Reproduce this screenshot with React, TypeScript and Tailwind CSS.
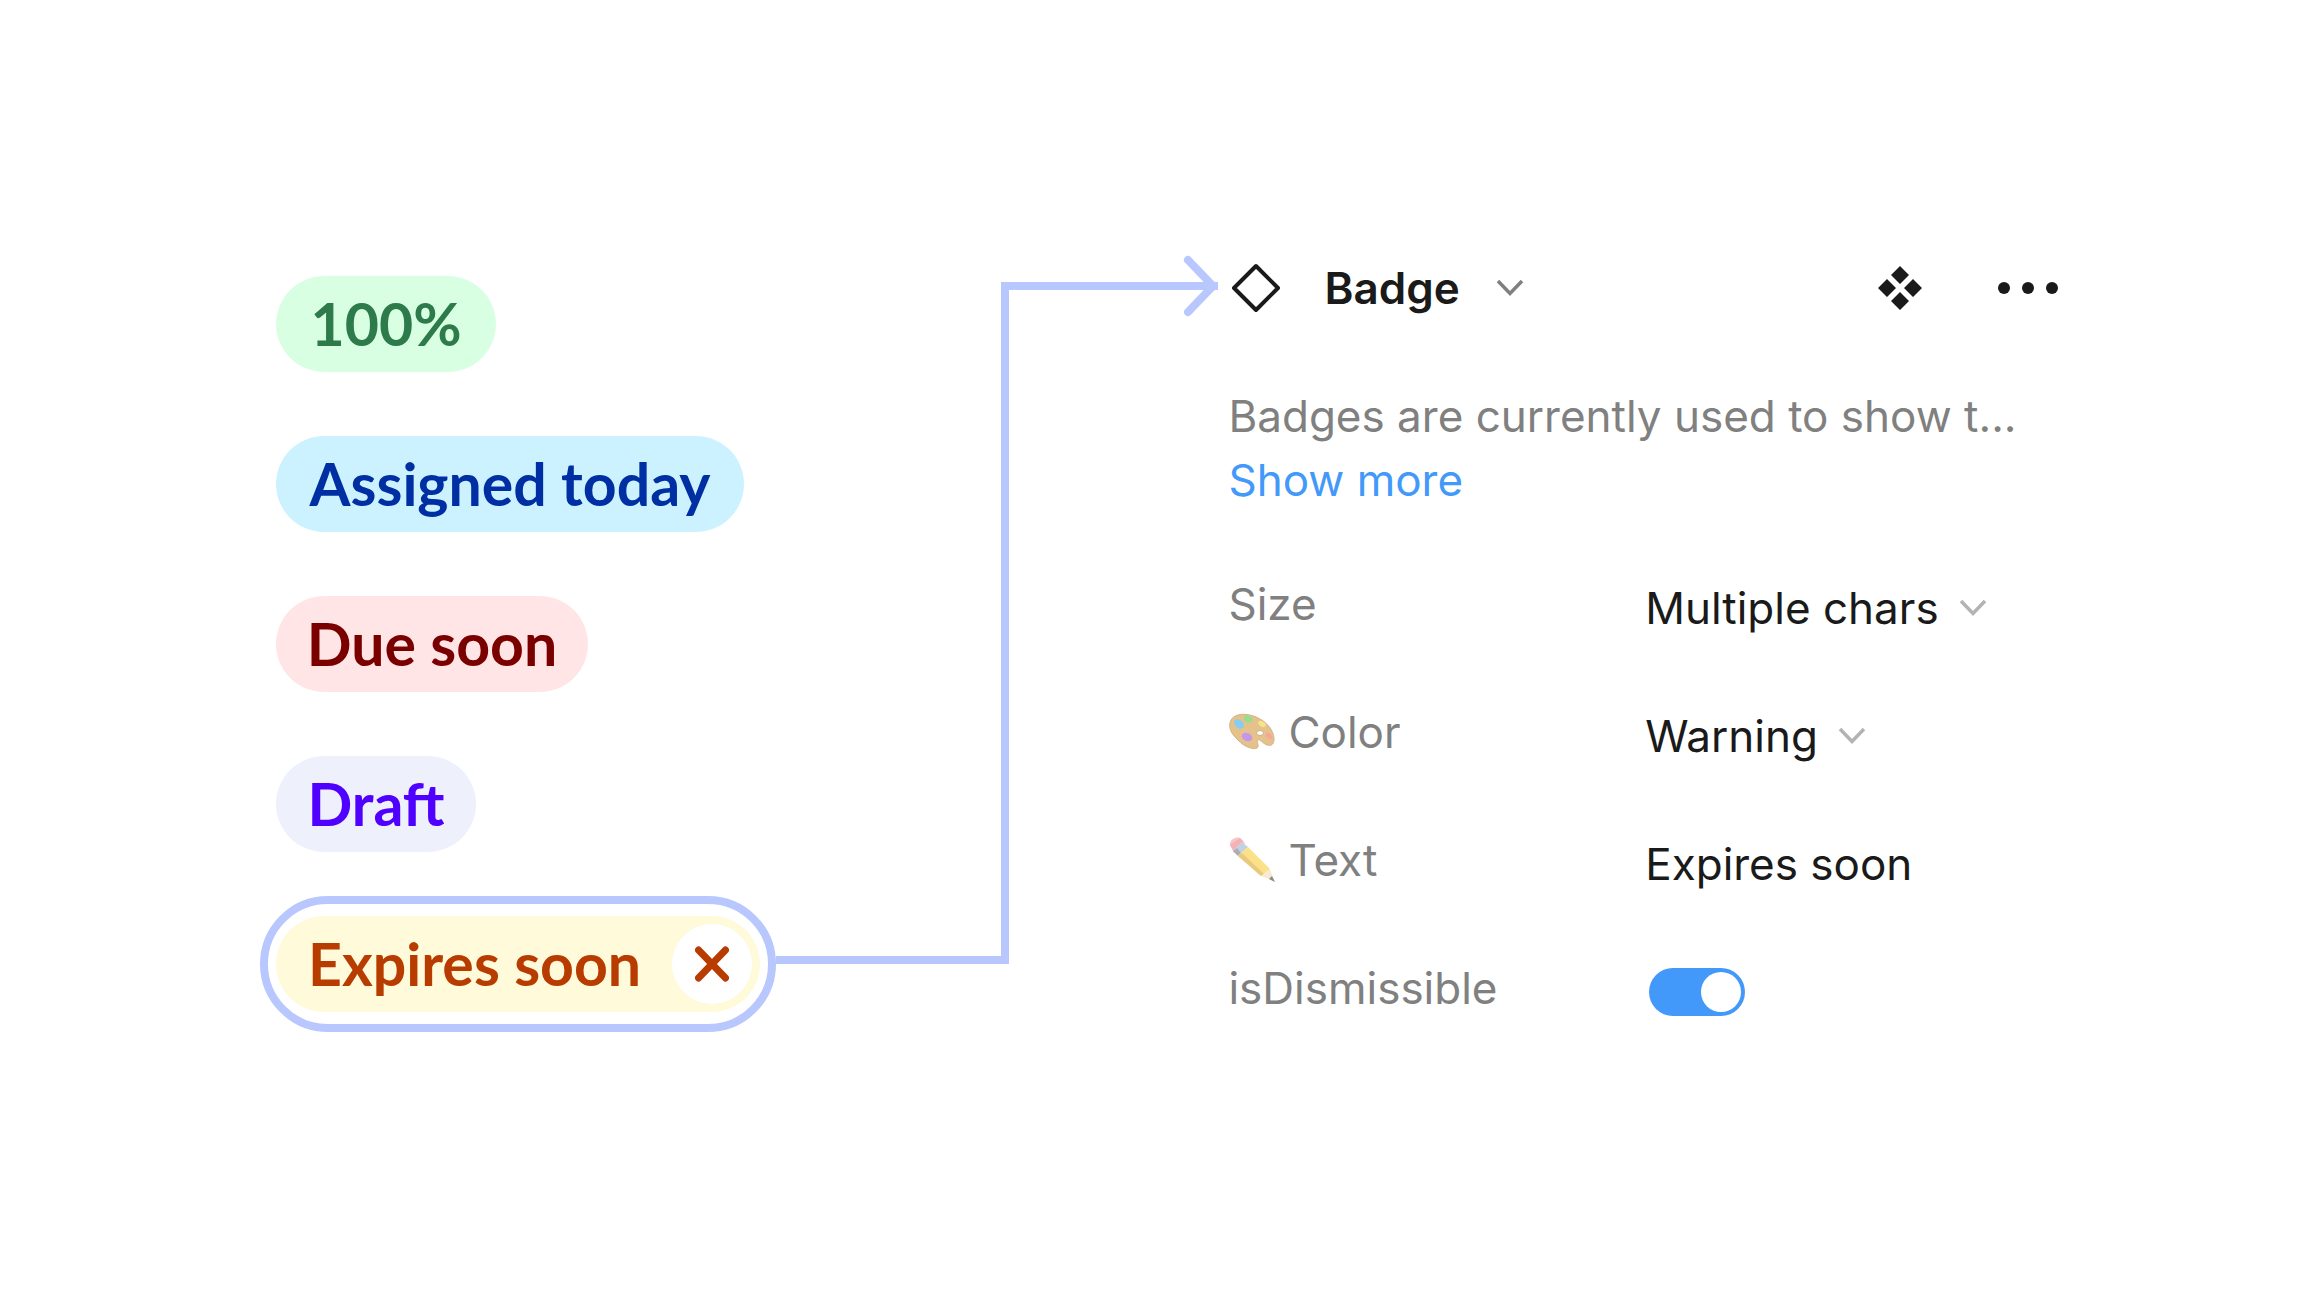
import React, { useState } from "react";

function Chevron({ className }: { className: string }) {
  return (
    <svg viewBox="0 0 28 18" className={className} fill="none" stroke="currentColor" strokeWidth="3.500" aria-hidden="true">
      <path d="M2 2 14 14.500 26 2" />
    </svg>
  );
}

const badges = [
  { text: "100%", style: "w-[220px] bg-[#d9ffe3] text-[#2d7a4b]" },
  { text: "Assigned today", style: "w-[468px] bg-[#ccf2ff] text-[#002fa3]" },
  { text: "Due soon", style: "w-[312px] bg-[#ffe5e5] text-[#7a0000]" },
  { text: "Draft", style: "w-[200px] bg-[#eef0fb] text-[#4f00ff]" },
];

function BadgeList() {
  return (
    <ul className="flex flex-col items-start font-[Lato,sans-serif] text-[59px] leading-[96px] font-bold whitespace-nowrap">
      {badges.map((b) => (
        <li key={b.text} className={`mb-16 ml-4 h-24 rounded-full text-center ${b.style}`}>
          {b.text}
        </li>
      ))}
      <li className="-mt-5 rounded-full border-8 border-[#b8c8ff] px-2 py-3">
        <span className="flex h-24 w-[484px] items-center justify-between rounded-full bg-[#fffad9] pr-2 pl-8 text-[#b83c00]">
          Expires soon
          <button aria-label="Dismiss" className="flex size-20 items-center justify-center rounded-full bg-white">
            <svg viewBox="0 0 34 36" className="h-9 w-[34px]" fill="none" stroke="currentColor" strokeWidth="7" strokeLinecap="round" aria-hidden="true">
              <path d="M3.500 4 30.500 32M30.500 4 3.500 32" />
            </svg>
          </button>
        </span>
      </li>
    </ul>
  );
}

function Connector() {
  return (
    <div className="mt-[6px] mb-[68px] flex min-w-0 flex-[8] self-stretch" aria-hidden="true">
      <div className="flex-[15] border-r-8 border-b-8 border-[#b8c8ff]" />
      <div className="relative flex-[14] border-t-8 border-[#b8c8ff]">
        <svg viewBox="0 0 36 68" className="absolute -top-[38px] right-0 h-[68px] w-9" fill="none" stroke="#b8c8ff" strokeWidth="8" strokeLinecap="round" strokeLinejoin="round">
          <path d="M6 8 31 34 6 60" />
        </svg>
      </div>
    </div>
  );
}

function Palette() {
  return (
    <svg viewBox="0 0 48 40" className="h-10 w-12 opacity-60" aria-hidden="true">
      <path d="M3 8C7 1 19 1 28 5c10 4 18 13 18 22 0 6-3 7-7 6-5-2-7-6-9-5s2 6-1 8c-3 2-13-1-19-8C2 21 0 14 3 8Z" fill="#d49a41" stroke="#b98232" />
      <ellipse cx="32" cy="21" rx="3.500" ry="2.500" fill="#fff" stroke="#a97a32" />
      <ellipse cx="20" cy="7" rx="4.500" ry="3.500" transform="rotate(20 20 7)" fill="#55c845" />
      <ellipse cx="11" cy="12" rx="5.500" ry="4" transform="rotate(40 11 12)" fill="#34afe8" />
      <ellipse cx="19" cy="25" rx="5.500" ry="4" transform="rotate(25 19 25)" fill="#a052df" />
      <ellipse cx="34" cy="12" rx="4" ry="2.500" transform="rotate(30 34 12)" fill="#f3d33a" />
      <ellipse cx="41" cy="24" rx="4" ry="2.500" transform="rotate(45 41 24)" fill="#f66a5a" />
    </svg>
  );
}

function Pencil() {
  return (
    <svg viewBox="0 0 48 48" className="size-12 opacity-60" aria-hidden="true">
      <path d="M2 9C1 5 7 0 12 2l5 5L6 17Z" fill="#f1a0a5" />
      <path d="M2 9 5 14 15 5 12 2Z" fill="#ed7f88" />
      <path d="M14 6 20 11 10 20 5 15Z" fill="#9fb4cf" />
      <path d="M5 15 9 12 13 17 10 20Z" fill="#6f7b87" />
      <path d="M20 11 42 33 33 40 10 20Z" fill="#f9cf3c" />
      <path d="M10 20 14 17 36 38 33 40Z" fill="#d9a62b" />
      <path d="M42 33 46 45 33 40Z" fill="#f3dcb5" />
      <path d="M44 40 47 46 41 43Z" fill="#3d3d3d" />
    </svg>
  );
}

function Row({ id, label, icon, children }: { id: string; label: string; icon?: React.ReactNode; children: React.ReactNode }) {
  return (
    <div className="grid h-16 grid-cols-2 items-start gap-x-1">
      <label htmlFor={id} className="flex h-16 items-center gap-3 text-[#808080]">
        {icon}
        {label}
      </label>
      <div className="mt-1 flex h-16 items-center gap-5 text-[#1a1a1a]">{children}</div>
    </div>
  );
}

function Select({ id, options }: { id: string; options: string[] }) {
  return (
    <>
      <select id={id} className="field-sizing-content appearance-none bg-transparent">
        {options.map((o) => (
          <option key={o}>{o}</option>
        ))}
      </select>
      <Chevron className="h-[18px] w-7 text-[#b3b3b3]" />
    </>
  );
}

export default function App() {
  const [text, setText] = useState("Expires soon");
  const [on, setOn] = useState(true);
  return (
    <main className="min-h-screen bg-white pt-[276px] pr-[246px] pl-[260px]">
      <div className="flex items-start">
        <BadgeList />
        <Connector />
        <section className="ml-2.5 min-w-0 flex-[15] font-[Inter,sans-serif] text-[44px] leading-[64px]">
          <header className="-mt-5 flex h-16 items-center text-[#1a1a1a]">
            <svg viewBox="0 0 56 56" className="size-14" fill="none" stroke="currentColor" strokeWidth="4" strokeLinejoin="round" aria-hidden="true">
              <path d="M28 6 50 28 28 50 6 28Z" />
            </svg>
            <h1 className="ml-10 font-semibold">
              <button className="flex items-center gap-9">
                Badge
                <Chevron className="h-[18px] w-7 text-[#808080]" />
              </button>
            </h1>
            <button aria-label="Go to main component" className="ml-auto">
              <svg viewBox="0 0 44 44" className="size-11" fill="currentColor" aria-hidden="true">
                <path d="M22 0 31 9 22 18 13 9ZM22 26 31 35 22 44 13 35ZM9 13 18 22 9 31 0 22ZM35 13 44 22 35 31 26 22Z" />
              </svg>
            </button>
            <button aria-label="More" className="ml-[76px]">
              <svg viewBox="0 0 60 12" className="h-3 w-[60px]" fill="currentColor" aria-hidden="true">
                <circle cx="6" cy="6" r="6" />
                <circle cx="30" cy="6" r="6" />
                <circle cx="54" cy="6" r="6" />
              </svg>
            </button>
          </header>
          <p className="mt-16 text-[#808080]">Badges are currently used to show t...</p>
          <a href="#more" className="block w-fit text-[#4299fa]">Show more</a>
          <form className="mt-[60px] flex flex-col gap-16">
            <Row id="size" label="Size">
              <Select id="size" options={["Multiple chars", "Single char"]} />
            </Row>
            <Row id="color" label="Color" icon={<Palette />}>
              <Select id="color" options={["Warning", "Success", "Danger"]} />
            </Row>
            <Row id="text" label="Text" icon={<Pencil />}>
              <input id="text" value={text} onChange={(e) => setText(e.target.value)} className="w-full bg-transparent" />
            </Row>
            <Row id="dismissible" label="isDismissible">
              <input
                id="dismissible"
                type="checkbox"
                role="switch"
                checked={on}
                onChange={(e) => setOn(e.target.checked)}
                className="ml-1 h-12 w-24 appearance-none rounded-full bg-[#b3b3b3] p-1 before:block before:size-10 before:rounded-full before:bg-white checked:bg-[#4299fa] checked:pl-[52px]"
              />
            </Row>
          </form>
        </section>
      </div>
    </main>
  );
}
